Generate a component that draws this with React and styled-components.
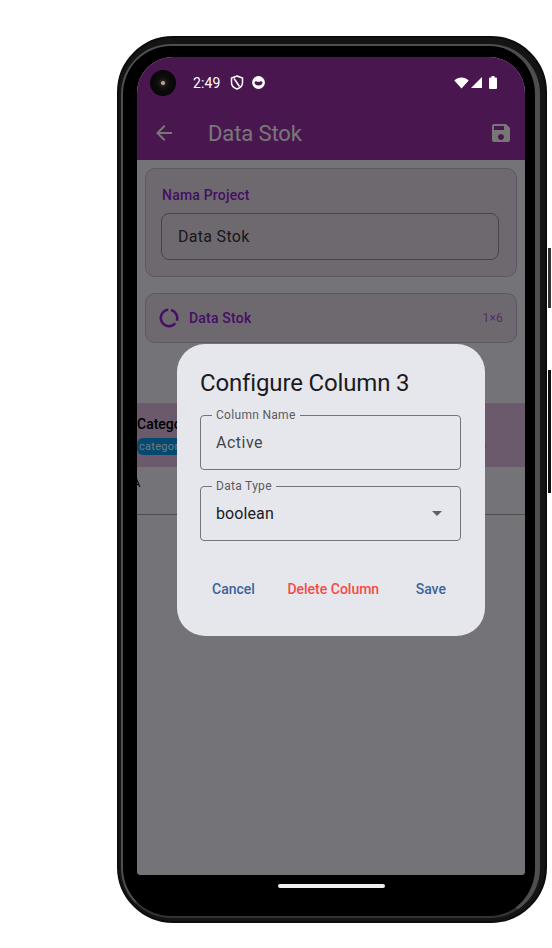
import React from "react";
import styled, { createGlobalStyle } from "styled-components";
import { MdArrowBack, MdSave, MdArrowDropDown } from "react-icons/md";

const Global = createGlobalStyle`
  html, body { margin: 0; padding: 0; background: #fff; }
  body { font-family: Roboto, "Liberation Sans", sans-serif; }
`;

const Page = styled.div`
  width: 552px;
  height: 948px;
  padding: 36px 0 0 117px;
  box-sizing: border-box;
  overflow: hidden;
`;

/* outer rim of the phone, the rings are nested bezels */
const Phone = styled.div`
  position: relative;
  width: 430px;
  height: 887px;
  box-sizing: border-box;
  border-radius: 56px;
  background: #141414;
  border: 2px solid #0c0c0c;
  padding: 6px 5px 3px 2px;
`;

const Rim = styled.div`
  height: 100%;
  box-sizing: border-box;
  border-radius: 50px;
  background: #000;
  border-style: solid;
  border-color: #4e4e4e #4e4e4e #333 #4e4e4e;
  border-width: 2px 5px 2px 2px;
  padding: 11px 10px 0 14px;
`;

const SideButton = styled.div`
  position: absolute;
  right: -6px;
  top: ${(p) => p.$top}px;
  width: 3px;
  height: ${(p) => p.$h}px;
  background: ${(p) => p.$color};
`;

const Screen = styled.div`
  position: relative;
  height: 818px;
  overflow: hidden;
  border-radius: 36px 36px 4px 4px;
  background: #e8e6f0;
  display: flex;
  flex-direction: column;
`;

const Header = styled.div`
  background: #942ca0;
  height: 103px;
  flex: none;
`;

const StatusBar = styled.div`
  height: 49px;
`;

const AppBar = styled.div`
  height: 54px;
  display: flex;
  align-items: center;
  padding: 0 12px 0 15px;
  color: #eee;
`;

const Title = styled.div`
  font-size: 22px;
  margin-left: 32px;
  flex: 1;
  letter-spacing: -0.1px;
`;

const Body = styled.div`
  flex: 1;
  padding: 8px 8px 0;
  display: flex;
  flex-direction: column;
`;

const Card = styled.div`
  border: 1px solid #c3a8c9;
  border-radius: 10px;
  background: #dcd2de;
  box-sizing: border-box;
`;

const ProjectCard = styled(Card)`
  height: 109px;
  padding: 18px 17px 0 16px;
`;

const CardLabel = styled.div`
  font-size: 14px;
  font-weight: 500;
  color: #8a20c8;
  letter-spacing: 0.2px;
  line-height: 17px;
`;

const ProjectInput = styled.div`
  margin: 9px 0 0 -1px;
  height: 47px;
  box-sizing: border-box;
  border: 1px solid #8e8a90;
  border-radius: 8px;
  font-size: 16px;
  letter-spacing: 0.3px;
  line-height: 45px;
  padding-left: 16px;
  color: #333036;
`;

const SheetRow = styled(Card)`
  margin-top: 16px;
  height: 50px;
  display: flex;
  align-items: center;
  padding: 0 13px;
  gap: 10px;
`;

const SheetName = styled(CardLabel)`
  flex: 1;
`;

const SheetSize = styled.div`
  font-size: 12px;
  color: #a860d0;
  letter-spacing: 0.2px;
`;

const Table = styled.div`
  margin: 60px -8px 0;
`;

const HeadRow = styled.div`
  height: 64px;
  box-sizing: border-box;
  border-top: 1px solid #c8c4cc;
  background: #d4b4d6;
  padding-top: 12px;
  position: relative;
`;

const ColumnName = styled.div`
  font-size: 14px;
  font-weight: 500;
  color: #000;
  line-height: 17px;
`;

const TypeChip = styled.div`
  margin-top: 5px;
  width: 60px;
  height: 17px;
  overflow: hidden;
  border-radius: 6px;
  background: #0a90e0;
  color: #d8f0ff;
  font-size: 11px;
  letter-spacing: 0.3px;
  line-height: 17px;
  padding-left: 2px;
  box-sizing: border-box;
`;

const NextChip = styled.div`
  position: absolute;
  left: 340px;
  top: 40px;
  width: 9px;
  height: 5px;
  background: #f0a040;
`;

const DataRow = styled.div`
  height: 48px;
  box-sizing: border-box;
  border-bottom: 1px solid #9c9aa0;
  font-size: 13px;
  line-height: 32px;
  text-indent: -5px;
  color: #000;
`;

const Scrim = styled.div`
  position: absolute;
  inset: 0;
  background: rgba(0, 0, 0, 0.5);
  display: flex;
  justify-content: center;
  padding-top: 287px;
  box-sizing: border-box;
`;

const StatusContent = styled.div`
  position: absolute;
  top: 0;
  left: 0;
  right: 0;
  height: 51px;
  display: flex;
  align-items: center;
  padding: 0 28px 0 13px;
  color: #fff;
`;

const CameraHole = styled.div`
  width: 26px;
  height: 26px;
  border-radius: 50%;
  background: radial-gradient(circle, #1e1a1a 0, #0a0a0a 45%, #030303 100%);
  display: flex;
  align-items: center;
  justify-content: center;
`;

const Lens = styled.div`
  width: 4px;
  height: 4px;
  border-radius: 50%;
  background: #c4a48c;
  box-shadow: 0 0 2px 1px #3a2e2a;
`;

const Clock = styled.div`
  font-size: 14px;
  margin-left: 17px;
  letter-spacing: 0.1px;
  margin-right: 10px;
`;

const StatusRight = styled.div`
  margin-left: auto;
  display: flex;
  align-items: center;
  gap: 2px;
`;

const LeftIcons = styled.div`
  display: flex;
  align-items: center;
  gap: 8px;
`;

const Dialog = styled.div`
  width: 308px;
  height: 292px;
  box-sizing: border-box;
  background: #e6e7ed;
  border-radius: 28px;
  padding: 24px 24px 0 23px;
  color: #1b1b1f;
`;

const DialogTitle = styled.div`
  font-size: 24px;
  line-height: 30px;
  letter-spacing: -0.15px;
  margin-bottom: 10px;
`;

const Outlined = styled.fieldset`
  margin: 0 0 9px;
  padding: 0 15px;
  height: 62px;
  box-sizing: border-box;
  border: 1px solid #74757c;
  border-radius: 4px;
  position: relative;
  display: flex;
  align-items: center;
  justify-content: space-between;
`;

const OutlinedLegend = styled.legend`
  font-size: 12px;
  color: #5a5c62;
  padding: 0 4px;
  margin-left: -4px;
  letter-spacing: 0.3px;
  line-height: 14px;
`;

const OutlinedValue = styled.div`
  font-size: 16px;
  letter-spacing: ${(p) => p.$spacing}px;
  margin-top: -7px;
  color: ${(p) => p.$color};
`;

const Arrow = styled(MdArrowDropDown)`
  position: absolute;
  right: 11px;
  top: 8px;
  color: #5f6066;
`;

const Actions = styled.div`
  margin-top: 40px;
  display: flex;
  justify-content: space-between;
  padding: 0 15px 0 12px;
`;

const TextButton = styled.div`
  font-size: 14px;
  font-weight: 500;
  line-height: 16px;
  margin-right: ${(p) => p.$shift || 0}px;
  color: ${(p) => p.$color};
`;

const GestureBar = styled.div`
  width: 107px;
  height: 4px;
  border-radius: 2px;
  background: #eee;
  margin: 9px auto 0;
`;

function Spinner() {
  return (
    <svg width="20" height="20" viewBox="0 0 22 22" fill="none" stroke="#8a20c8" strokeWidth="2.800">
      <path d="M13.300 2.300A9 9 0 0 1 19.460 14.080" />
      <path d="M17.900 16.800A9 9 0 1 1 10.200 2.030" />
    </svg>
  );
}

function ShieldIcon() {
  return (
    <svg width="14" height="15" viewBox="0 0 14 15" fill="none" stroke="#fff" strokeWidth="1.500">
      <path d="M7 1 12.500 3v4.500c0 3-2.300 5.500-5.500 6.500-3.200-1-5.500-3.500-5.500-6.500V3z" />
      <path d="M4 3.500 9.500 11.500" />
    </svg>
  );
}

function FaceIcon() {
  return (
    <svg width="13" height="13" viewBox="0 0 13 13">
      <circle cx="6.500" cy="6.500" r="6.400" fill="#fff" />
      <path d="M2.400 6.200 4 5l1 .8h3L9 5l1.600 1.200A4.200 4.200 0 0 1 2.400 6.200z" fill="#4a1650" />
    </svg>
  );
}

function WifiIcon() {
  return (
    <svg width="15" height="12" viewBox="0 0 15 12">
      <path d="M0.300 3.500C2.300 1.500 4.800 0.500 7.500 0.500s5.200 1 7.200 3L7.500 11.500z" fill="#fff" />
    </svg>
  );
}

function SignalIcon() {
  return (
    <svg width="11" height="11" viewBox="0 0 11 11">
      <path d="M0 11 11 0v11z" fill="#fff" />
    </svg>
  );
}

function BatteryIcon() {
  return (
    <svg width="8" height="13" viewBox="0 0 8 13" style={{ marginLeft: 5 }}>
      <path d="M2.500 0h3v1.500H7a1 1 0 0 1 1 1V12a1 1 0 0 1-1 1H1a1 1 0 0 1-1-1V2.500a1 1 0 0 1 1-1h1.500z" fill="#fff" />
    </svg>
  );
}

export default function App() {
  return (
    <>
      <Global />
      <Page>
        <Phone>
          <SideButton $top={210} $h={60} $color="#333" />
          <SideButton $top={332} $h={123} $color="#111" />
          <Rim>
            <Screen>
              <Header>
                <StatusBar />
                <AppBar>
                  <MdArrowBack size={24} />
                  <Title>Data Stok</Title>
                  <MdSave size={24} />
                </AppBar>
              </Header>
              <Body>
                <ProjectCard>
                  <CardLabel>Nama Project</CardLabel>
                  <ProjectInput>Data Stok</ProjectInput>
                </ProjectCard>
                <SheetRow>
                  <Spinner />
                  <SheetName>Data Stok</SheetName>
                  <SheetSize>1×6</SheetSize>
                </SheetRow>
                <Table>
                  <HeadRow>
                    <ColumnName>Category</ColumnName>
                    <TypeChip>category</TypeChip>
                    <NextChip />
                  </HeadRow>
                  <DataRow>A</DataRow>
                </Table>
              </Body>
              <Scrim>
                <Dialog>
                  <DialogTitle>Configure Column 3</DialogTitle>
                  <Outlined>
                    <OutlinedLegend>Column Name</OutlinedLegend>
                    <OutlinedValue $color="#44464c" $spacing={0.5}>Active</OutlinedValue>
                  </Outlined>
                  <Outlined>
                    <OutlinedLegend>Data Type</OutlinedLegend>
                    <OutlinedValue $color="#1b1b1f" $spacing={0.1}>boolean</OutlinedValue>
                    <Arrow size={24} />
                  </Outlined>
                  <Actions>
                    <TextButton $color="#3d6497">Cancel</TextButton>
                    <TextButton $color="#f44b45" $shift={4}>Delete Column</TextButton>
                    <TextButton $color="#3d6497">Save</TextButton>
                  </Actions>
                </Dialog>
              </Scrim>
              <StatusContent>
                <CameraHole>
                  <Lens />
                </CameraHole>
                <Clock>2:49</Clock>
                <LeftIcons>
                  <ShieldIcon />
                  <FaceIcon />
                </LeftIcons>
                <StatusRight>
                  <WifiIcon />
                  <SignalIcon />
                  <BatteryIcon />
                </StatusRight>
              </StatusContent>
            </Screen>
            <GestureBar />
          </Rim>
        </Phone>
      </Page>
    </>
  );
}
